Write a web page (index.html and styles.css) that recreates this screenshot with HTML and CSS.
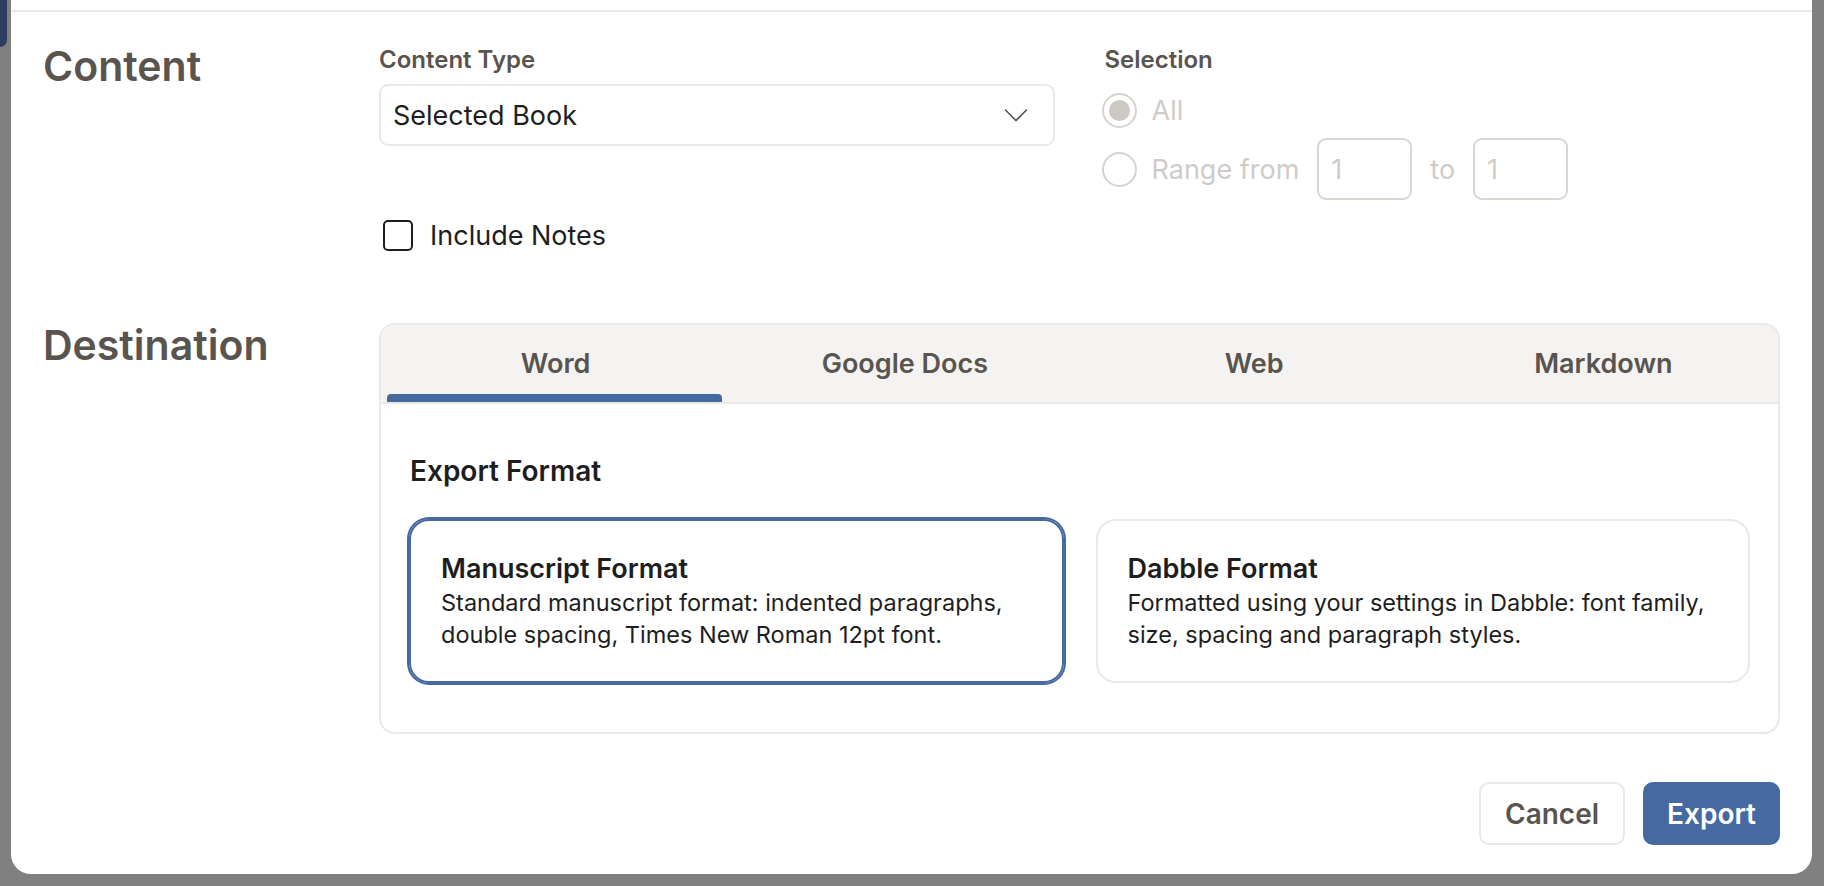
FILE: index.html
```html
<!DOCTYPE html>
<html lang="en">
<head>
<meta charset="UTF-8" />
<meta name="viewport" content="width=device-width, initial-scale=1.0"/>
<title>Export</title>
<link rel="stylesheet" href="styles.css">
</head>
<body>

<div class="app-edge"></div>

<div class="modal">
  <div class="modal-head"></div>

  <div class="modal-body">
    <section class="row row-content">
      <h2 class="row-title">Content</h2>
      <div class="row-main">
        <div class="content-grid">
          <div class="field">
            <label class="field-label">Content Type</label>
            <div class="select">
              <span>Selected Book</span>
              <svg class="chevron" width="24" height="14" viewBox="0 0 24 14">
                <path d="M1 1.5 L12 12.5 L23 1.5" fill="none" stroke="#5a5550" stroke-width="1.6"/>
              </svg>
            </div>
          </div>
          <div class="field">
            <label class="field-label">Selection</label>
            <div class="radio-row">
              <span class="radio checked"></span>
              <span>All</span>
            </div>
            <div class="radio-row range">
              <span class="radio"></span>
              <span>Range from</span>
              <div class="num-input">1</div>
              <span>to</span>
              <div class="num-input">1</div>
            </div>
          </div>
        </div>
        <div class="check-row">
          <span class="checkbox"></span>
          <span>Include Notes</span>
        </div>
      </div>
    </section>

    <section class="row row-dest">
      <h2 class="row-title">Destination</h2>
      <div class="row-main">
        <div class="tabs">
          <div class="tab-bar">
            <div class="tab active">Word</div>
            <div class="tab">Google Docs</div>
            <div class="tab">Web</div>
            <div class="tab">Markdown</div>
          </div>
          <div class="tab-panel">
            <h3 class="panel-title">Export Format</h3>
            <div class="formats">
              <div class="format selected">
                <div class="format-name">Manuscript Format</div>
                <div class="format-desc">Standard manuscript format: indented paragraphs, double spacing, Times New Roman 12pt font.</div>
              </div>
              <div class="format">
                <div class="format-name">Dabble Format</div>
                <div class="format-desc">Formatted using your settings in Dabble: font family, size, spacing and paragraph styles.</div>
              </div>
            </div>
          </div>
        </div>
      </div>
    </section>

    <div class="actions">
      <button class="btn btn-cancel">Cancel</button>
      <button class="btn btn-primary">Export</button>
    </div>
  </div>
</div>

</body>
</html>
```

FILE: styles.css
```css
* { margin: 0; padding: 0; box-sizing: border-box; }
html, body {
  width: 100%;
  height: 100%;
  overflow: hidden;
  background: #808080;
}
body {
  font-family: 'Inter', 'Liberation Sans', sans-serif;
  color: #1e1e1e;
  padding: 0 12px 12px 11px;
}
.app-edge {
  position: absolute;
  top: 0; left: 0;
  width: 7px;
  height: 47px;
  background: #2b3e5f;
  border-bottom-right-radius: 7px;
}
.modal {
  height: 874px;
  background: #fff;
  border-radius: 0 0 20px 20px;
  display: flex;
  flex-direction: column;
}
.modal-head {
  flex-shrink: 0;
  height: 12px;
  border-bottom: 2px solid #ebe8e5;
}
.modal-body {
  flex: 1;
  padding: 35px 32px 0 32px;
  display: flex;
  flex-direction: column;
}
.row {
  display: grid;
  grid-template-columns: 336px 1fr;
}
.row-title {
  font-size: 41px;
  line-height: 38px;
  font-weight: 600;
  color: #5a544f;
}
.content-grid {
  display: grid;
  grid-template-columns: 1fr 1fr;
  gap: 50px;
}
.field-label {
  display: block;
  font-size: 24px;
  line-height: 26px;
  font-weight: 600;
  color: #5a544f;
}
.select {
  margin-top: 11px;
  height: 62px;
  border: 2px solid #ebe8e5;
  border-radius: 9px;
  display: flex;
  align-items: center;
  justify-content: space-between;
  padding: 0 25px 0 12px;
  font-size: 27px;
}
.radio-row {
  display: flex;
  align-items: center;
  gap: 15px;
  font-size: 27px;
  color: #d0cbc7;
  height: 34px;
  margin-top: 20px;
}
.radio-row.range {
  height: 62px;
  margin-top: 11px;
  gap: 18px;
}
.radio-row.range span:nth-child(2) { margin-left: -3px; }
.radio {
  width: 35px;
  height: 35px;
  margin-left: -3px;
  border: 2px solid #d6d2ce;
  border-radius: 50%;
  display: flex;
  align-items: center;
  justify-content: center;
  flex-shrink: 0;
}
.radio.checked::after {
  content: "";
  width: 21px;
  height: 21px;
  border-radius: 50%;
  background: #ccc8c4;
}
.num-input {
  width: 95px;
  height: 62px;
  border: 2px solid #d9d5d1;
  border-radius: 9px;
  padding-left: 12px;
  display: flex;
  align-items: center;
  color: #d0cbc7;
}
.check-row {
  margin-top: 19px;
  display: flex;
  align-items: center;
  gap: 17px;
  font-size: 27px;
  padding-left: 4px;
}
.checkbox {
  width: 30px;
  height: 31px;
  border: 2px solid #1e1e1e;
  border-radius: 5px;
}
.row-dest { margin-top: 71px; }
.row-dest .row-title { margin-top: 3px; }
.tabs {
  border: 2px solid #ebe8e5;
  border-radius: 16px;
  overflow: hidden;
}
.tab-bar {
  display: flex;
  background: #f4f3f1;
  border-bottom: 2px solid #ebe8e5;
  height: 79px;
}
.tab {
  flex: 1;
  position: relative;
  display: flex;
  align-items: center;
  justify-content: center;
  font-size: 27px;
  font-weight: 600;
  color: #5a544f;
}
.tab.active::after {
  content: "";
  position: absolute;
  left: 6px;
  right: 8px;
  bottom: 0;
  height: 8px;
  background: #46699f;
  border-radius: 4px 4px 0 0;
}
.tab-panel {
  padding: 0 28px 49px 28px;
}
.panel-title {
  font-size: 28px;
  line-height: 32px;
  font-weight: 600;
  margin: 51px 0 0 1px;
  color: #1e1e1e;
}
.formats {
  margin-top: 32px;
  display: grid;
  grid-template-columns: 1fr 1fr;
  gap: 32px;
}
.format {
  border: 2px solid #ebe8e5;
  border-radius: 20px;
  padding: 32px 30px 30px 30px;
}
.format.selected {
  border-color: #46699f;
  box-shadow: 0 0 0 2px #46699f;
}
.format-name {
  font-size: 27px;
  line-height: 32px;
  font-weight: 600;
}
.format-desc {
  font-size: 23.5px;
  line-height: 32px;
  margin-top: 2px;
}
.actions {
  margin-top: 48px;
  display: flex;
  justify-content: flex-end;
  gap: 18px;
}
.btn {
  height: 63px;
  padding: 0 24px;
  border-radius: 10px;
  font-family: inherit;
  font-size: 28px;
  font-weight: 600;
  cursor: pointer;
}
.btn-cancel {
  background: #fff;
  border: 2px solid #ebe8e5;
  color: #5a544f;
}
.btn-primary {
  background: #46699f;
  border: none;
  color: #fff;
}
```
